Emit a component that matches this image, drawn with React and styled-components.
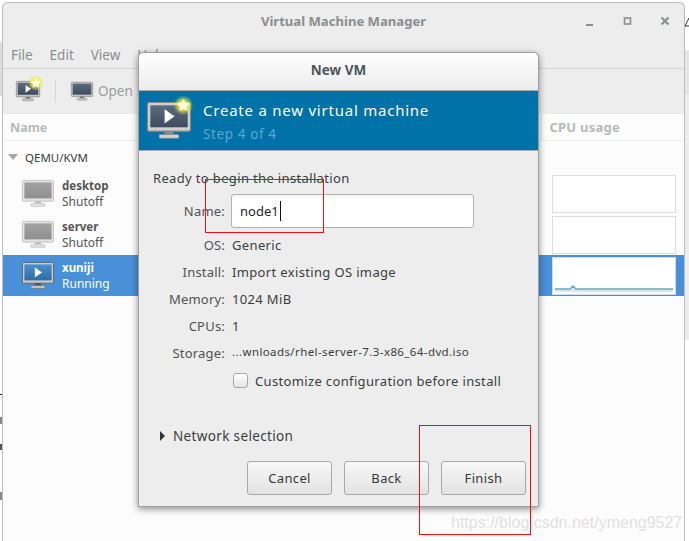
import React from 'react'
import styled, { createGlobalStyle } from 'styled-components'

const Global = createGlobalStyle`
  html, body {
    margin: 0;
    padding: 0;
    background: #fdfdfd;
    font-family: "Noto Sans", "DejaVu Sans", sans-serif;
    font-size: 13px;
  }
`

const Page = styled.div`
  position: relative;
  width: 689px;
  height: 541px;
  overflow: hidden;
  display: flex;
  background: #fdfdfd;
`

const LeftStrip = styled.div`
  width: 2px;
  background: linear-gradient(
    to bottom,
    #fff 0, #fff 42px, #ddd 42px, #ddd 96px, #fff 96px, #fff 394px,
    #333 394px, #333 395px, #fff 395px, #fff 417px, #888 417px, #888 424px,
    #fff 424px, #fff 444px, #555 444px, #555 450px, #fff 450px, #fff 492px,
    #888 492px, #888 500px, #fff 500px
  );
`

const RightStrip = styled.div`
  flex: 1;
  position: relative;
  background: linear-gradient(to bottom, #fff 0, #fff 50px, #e6e6e6 50px, #e6e6e6 95px, #ededed 95px, #ededed 340px, #fff 340px);
  font-size: 12px;
  color: #333;
  overflow: hidden;
`

const Window = styled.div`
  width: 683px;
  height: 541px;
  margin-top: 2px;
  box-sizing: border-box;
  border: 1px solid #bdbdbd;
  border-bottom: none;
  border-radius: 6px 6px 0 0;
  display: flex;
  flex-direction: column;
  background: #ededed;
`

const TitleBar = styled.div`
  height: 35px;
  padding-bottom: 2px;
  flex: none;
  display: flex;
  align-items: center;
  justify-content: center;
  position: relative;
  color: #8b8e8f;
  font-weight: 700;
  font-size: 13.1px;
`

const WinControls = styled.div`
  position: absolute;
  right: 11px;
  top: 11px;
  display: flex;
  gap: 23px;
  align-items: center;
`

const MenuBar = styled.div`
  height: 27px;
  padding-top: 1px;
  flex: none;
  display: flex;
  align-items: center;
  gap: 17px;
  padding-left: 8px;
  color: #8b8e8f;
  font-size: 13.5px;
  border-bottom: 1px solid #d6d6d6;
`

const Toolbar = styled.div`
  height: 44px;
  padding-bottom: 1px;
  flex: none;
  display: flex;
  align-items: center;
  padding-left: 13px;
  color: #9a9d9e;
  font-size: 13.5px;
`

const ToolSep = styled.div`
  width: 1px;
  height: 22px;
  background: #d8d8d8;
  margin: 0 15px;
`

const OpenLabel = styled.span`
  margin-left: 5px;
`

const ListHead = styled.div`
  height: 27px;
  flex: none;
  display: flex;
  justify-content: space-between;
  align-items: stretch;
  background: #fcfcfc;
  border-bottom: 1px solid #efefef;
  box-sizing: border-box;
  padding: 0 64px 0 7px;
  color: #b8baba;
  font-weight: 700;
  font-size: 12.5px;
`

const HeadCell = styled.span`
  display: flex;
  align-items: center;
`

const CpuHead = styled(HeadCell)`
  font-size: 13px;
  letter-spacing: 0.25px;
  border-left: 1px solid #eeeeee;
  padding-left: 7px;
`

const List = styled.div`
  flex: 1;
  background: #fcfcfc;
`

const Group = styled.div`
  height: 32px;
  display: flex;
  align-items: center;
  gap: 7px;
  padding-left: 5px;
  color: #3a3d3e;
  font-size: 11.5px;
`

const Caret = styled.span`
  width: 0;
  height: 0;
  border-left: 5px solid transparent;
  border-right: 5px solid transparent;
  border-top: 6px solid #a8a8a8;
`

const Row = styled.div`
  height: 41px;
  display: flex;
  align-items: center;
  padding-left: 19px;
  background: ${({ $active }) => ($active ? '#4a90d9' : 'transparent')};
  color: ${({ $active }) => ($active ? '#fff' : '#555')};
`

const RowText = styled.div`
  margin-left: 8px;
  margin-top: 1px;
  display: flex;
  flex-direction: column;
  line-height: 16px;
  flex: 1;
`

const RowName = styled.span`
  font-weight: 700;
  font-size: 11.5px;
`

const RowState = styled.span`
  font-size: 12px;
`

const Graph = styled.div`
  width: 124px;
  height: 38px;
  margin-right: 8px;
  box-sizing: border-box;
  background: #fff;
  border: 1px solid ${({ $active }) => ($active ? '#cfdced' : '#e0dcdc')};
  display: flex;
`

const Dialog = styled.div`
  position: absolute;
  left: 138px;
  top: 52px;
  width: 401px;
  height: 455px;
  box-sizing: border-box;
  display: flex;
  flex-direction: column;
  background: #ededed;
  border: 1px solid #a0a0a0;
  border-radius: 5px 5px 0 0;
  box-shadow: 0 2px 7px rgba(0, 0, 0, 0.45);
`

const DialogTitle = styled.div`
  height: 34px;
  padding-bottom: 3px;
  flex: none;
  display: flex;
  align-items: center;
  justify-content: center;
  font-weight: 700;
  font-size: 13.5px;
  color: #4d5558;
  background: linear-gradient(to bottom, #fff, #ececec);
  border-radius: 5px 5px 0 0;
  border-bottom: 1px solid #a8a8a8;
`

const Banner = styled.div`
  height: 59px;
  flex: none;
  display: flex;
  align-items: center;
  background: #0072a8;
  border-bottom: 1px solid #a8b0b4;
  padding-left: 8px;
  gap: 12px;
`

const BannerText = styled.div`
  display: flex;
  flex-direction: column;
  gap: 4px;
  margin-top: 2px;
`

const BannerTitle = styled.div`
  color: #fff;
  font-size: 15px;
  letter-spacing: 0.77px;
  line-height: 20px;
`

const BannerStep = styled.div`
  color: #5aa6d6;
  font-size: 13.5px;
  letter-spacing: 0.6px;
  line-height: 20px;
`

const Body = styled.div`
  flex: 1;
  display: flex;
  flex-direction: column;
  padding: 18px 12px 11px 14px;
  color: #3a3d3e;
  font-size: 13px;
  letter-spacing: 0.35px;
`

const Ready = styled.div`
  line-height: 18px;
`

const Form = styled.div`
  display: grid;
  grid-template-columns: 72px 1fr;
  grid-template-rows: 37px repeat(5, 27px);
  column-gap: 7px;
  align-items: center;
  margin-top: 7px;
`

const Label = styled.div`
  text-align: right;
  color: #4f5354;
  letter-spacing: 0.2px;
`

const Value = styled.div`
  white-space: nowrap;
`

const SmallValue = styled(Value)`
  font-size: 11.5px;
  letter-spacing: 0.4px;
  margin-bottom: 2px;
`

const NameCell = styled.div`
  height: 34px;
  align-self: start;
  width: 243px;
  box-sizing: border-box;
  margin-left: -1px;
  padding-left: 8px;
  display: flex;
  align-items: center;
  background: linear-gradient(to bottom, #f4f4f4, #fff 5px);
  border: 1px solid #b2b2b2;
  border-radius: 3px;
  color: #1f1f1f;
  letter-spacing: 0;
`

const Cursor = styled.span`
  width: 1px;
  height: 20px;
  margin-left: 1px;
  background: #111;
`

const NameLabel = styled(Label)`
  align-self: start;
  line-height: 34px;
`

const CheckRow = styled.label`
  display: flex;
  align-items: center;
  gap: 7px;
  margin-left: 80px;
  margin-top: 1px;
  height: 27px;
`

const CheckBox = styled.span`
  flex: none;
  width: 15px;
  height: 15px;
  box-sizing: border-box;
  border: 1px solid #a8a8a8;
  border-radius: 3px;
  background: linear-gradient(to bottom, #fff, #e4e4e4);
`

const Expander = styled.div`
  display: flex;
  align-items: center;
  gap: 8px;
  margin-top: 32px;
  margin-left: 7px;
  height: 20px;
  font-size: 13.5px;
`

const RightCaret = styled.span`
  width: 0;
  height: 0;
  border-top: 5px solid transparent;
  border-bottom: 5px solid transparent;
  border-left: 5px solid #333;
`

const Buttons = styled.div`
  margin-top: auto;
  display: flex;
  justify-content: flex-end;
  gap: 12px;
`

const Button = styled.div`
  width: 85px;
  height: 34px;
  box-sizing: border-box;
  display: flex;
  align-items: center;
  justify-content: center;
  border: 1px solid #a9a9a9;
  border-radius: 3px;
  background: linear-gradient(to bottom, #f8f8f8, #e2e2e2);
  color: #36393a;
`

const RedBox = styled.div`
  position: absolute;
  left: ${({ $x }) => $x}px;
  top: ${({ $y }) => $y}px;
  width: ${({ $w }) => $w}px;
  height: ${({ $h }) => $h}px;
  box-sizing: border-box;
  border: 1px solid #f01010;
`

const Watermark = styled.div`
  position: absolute;
  left: 451px;
  top: 514px;
  font-family: "Liberation Sans", Arial, sans-serif;
  font-size: 16px;
  color: rgba(205, 205, 205, 0.6);
  white-space: nowrap;
`

const CornerGlyph = styled.svg`
  position: absolute;
  left: 0;
  top: 17px;
`

const MonitorSvg = styled.svg`
  flex: none;
  overflow: visible;
`

function Monitor({ width = 32, screen = '#3f4b5e', screenTop = '#5b6b80', bezel = '#d2d2d2', edge = '#8a8a8a', play, star, starScale = 1, id }) {
  return (
    <MonitorSvg width={width} height={width * 0.85} viewBox="0 0 40 34">
      <defs>
        <linearGradient id={id} x1="0" y1="0" x2="0" y2="1">
          <stop offset="0" stopColor={screenTop} />
          <stop offset="1" stopColor={screen} />
        </linearGradient>
        <radialGradient id={id + 'g'}>
          <stop offset="0.4" stopColor="#f4f44a" stopOpacity="0.95" />
          <stop offset="1" stopColor="#e8e820" stopOpacity="0" />
        </radialGradient>
      </defs>
      <rect x="0.5" y="0.5" width="39" height="26" rx="1.5" fill={bezel} stroke={edge} />
      <rect x="3" y="3" width="34" height="20" fill={`url(#${id})`} />
      {play && <path d="M16 6.5 L25 13 L16 19.5 Z" fill="#fff" />}
      <rect x="16" y="26.5" width="8" height="3" fill={edge} />
      <rect x="11" y="29.5" width="18" height="3.5" rx="1" fill={bezel} stroke={edge} strokeWidth="0.7" />
      {star && (
        <g transform={`translate(33 3) scale(${starScale}) translate(-33 -3)`}>
          <circle cx="33" cy="3" r="9" fill={`url(#${id}g)`} />
          <path d="M33 -3 L34.8 1 L39 1.4 L35.8 4.2 L36.8 8.4 L33 6.2 L29.2 8.4 L30.2 4.2 L27 1.4 L31.2 1 Z" fill="#fffde0" />
        </g>
      )}
    </MonitorSvg>
  )
}

function CpuLine() {
  return (
    <svg width="122" height="36" viewBox="0 0 122 36">
      <path d="M2 31 H17 L20 28 L23 31 H120 V34 H2 Z" fill="#d8e8ee" />
      <path d="M2 31 H17 L20 28 L23 31 H120" fill="none" stroke="#6fa5ba" strokeWidth="1.4" />
    </svg>
  )
}

function App() {
  return (
    <>
      <Global />
      <Page>
        <LeftStrip />
        <Window>
          <TitleBar>
            Virtual Machine Manager
            <WinControls>
              <svg width="15" height="15" viewBox="0 0 15 15"><rect x="4" y="10" width="7" height="2" fill="#8b8e8f" /></svg>
              <svg width="15" height="15" viewBox="0 0 15 15"><rect x="4.5" y="4" width="6" height="6" fill="none" stroke="#8b8e8f" strokeWidth="1.6" /></svg>
              <svg width="15" height="15" viewBox="0 0 15 15"><path d="M3.5 3.5 L10.5 10.5 M10.5 3.5 L3.5 10.5" stroke="#8b8e8f" strokeWidth="2.2" /></svg>
            </WinControls>
          </TitleBar>
          <MenuBar>
            <span>File</span>
            <span>Edit</span>
            <span>View</span>
            <span>Help</span>
          </MenuBar>
          <Toolbar>
            <Monitor id="tb1" width={24} star starScale={1.5} play bezel="#c6c6c6" edge="#777" />
            <ToolSep />
            <Monitor id="tb2" width={22} bezel="#c6c6c6" edge="#777" />
            <OpenLabel>Open</OpenLabel>
          </Toolbar>
          <ListHead>
            <HeadCell>Name</HeadCell>
            <CpuHead>CPU usage</CpuHead>
          </ListHead>
          <List>
            <Group>
              <Caret />
              QEMU/KVM
            </Group>
            <Row>
              <Monitor id="r1" width={32} screen="#8f8f8f" screenTop="#a2a2a2" bezel="#e2e2e2" edge="#bdbdbd" />
              <RowText>
                <RowName>desktop</RowName>
                <RowState>Shutoff</RowState>
              </RowText>
              <Graph />
            </Row>
            <Row>
              <Monitor id="r2" width={32} screen="#8f8f8f" screenTop="#a2a2a2" bezel="#e2e2e2" edge="#bdbdbd" />
              <RowText>
                <RowName>server</RowName>
                <RowState>Shutoff</RowState>
              </RowText>
              <Graph />
            </Row>
            <Row $active>
              <Monitor id="r3" width={32} screen="#2e6ca8" screenTop="#4a8fcc" bezel="#c9c9c9" edge="#555" play />
              <RowText>
                <RowName>xuniji</RowName>
                <RowState>Running</RowState>
              </RowText>
              <Graph $active>
                <CpuLine />
              </Graph>
            </Row>
          </List>
        </Window>
        <RightStrip>
          <CornerGlyph width="6" height="10" viewBox="0 0 6 10">
            <path d="M0 9 L4 1 L8 9 Z" fill="none" stroke="#333" />
          </CornerGlyph>
        </RightStrip>

        <Dialog>
          <DialogTitle>New VM</DialogTitle>
          <Banner>
            <Monitor id="bn" width={44} star bezel="#d0d0d0" edge="#8a8a8a" play />
            <BannerText>
              <BannerTitle>Create a new virtual machine</BannerTitle>
              <BannerStep>Step 4 of 4</BannerStep>
            </BannerText>
          </Banner>
          <Body>
            <Ready>Ready to begin the installation</Ready>
            <Form>
              <NameLabel>Name:</NameLabel>
              <NameCell>
                node1
                <Cursor />
              </NameCell>
              <Label>OS:</Label>
              <Value>Generic</Value>
              <Label>Install:</Label>
              <Value>Import existing OS image</Value>
              <Label>Memory:</Label>
              <Value>1024 MiB</Value>
              <Label>CPUs:</Label>
              <Value>1</Value>
              <Label>Storage:</Label>
              <SmallValue>...wnloads/rhel-server-7.3-x86_64-dvd.iso</SmallValue>
            </Form>
            <CheckRow>
              <CheckBox />
              Customize configuration before install
            </CheckRow>
            <Expander>
              <RightCaret />
              Network selection
            </Expander>
            <Buttons>
              <Button>Cancel</Button>
              <Button>Back</Button>
              <Button>Finish</Button>
            </Buttons>
          </Body>
        </Dialog>

        <RedBox $x={205} $y={179} $w={119} $h={54} />
        <RedBox $x={419} $y={425} $w={112} $h={110} />
        <Watermark>https://blog.csdn.net/ymeng9527</Watermark>
      </Page>
    </>
  )
}

export default App
